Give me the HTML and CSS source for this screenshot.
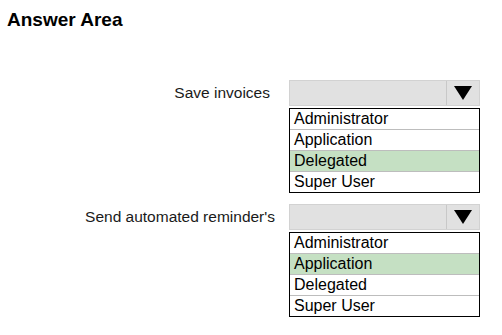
FILE: index.html
```html
<!DOCTYPE html>
<html lang="en">
<head>
  <meta charset="UTF-8">
  <title>Answer Area</title>
  <link rel="stylesheet" href="styles.css">
</head>
<body>
  <h1 class="title">Answer Area</h1>
  <div class="answers">
    <div class="row">
      <div class="label">Save invoices</div>
      <div class="field">
        <div class="select">
          <div class="select-value"></div>
          <div class="select-arrow"><span class="triangle"></span></div>
        </div>
        <ul class="options">
          <li>Administrator</li>
          <li>Application</li>
          <li class="picked">Delegated</li>
          <li>Super User</li>
        </ul>
      </div>
    </div>
    <div class="row">
      <div class="label">Send automated reminder's</div>
      <div class="field">
        <div class="select">
          <div class="select-value"></div>
          <div class="select-arrow"><span class="triangle"></span></div>
        </div>
        <ul class="options">
          <li>Administrator</li>
          <li class="picked">Application</li>
          <li>Delegated</li>
          <li>Super User</li>
        </ul>
      </div>
    </div>
  </div>
</body>
</html>
```

FILE: styles.css
```css
body {
  margin: 0;
  background-color: #fff;
  font-family: "Liberation Sans", Arial, sans-serif;
  color: #111;
}

.title {
  margin: 0;
  padding: 8px 7px 0;
  font-size: 19px;
  line-height: 24px;
  font-weight: bold;
  color: #000;
}

.answers {
  display: flex;
  flex-direction: column;
  gap: 11px;
  padding-top: 48px;
}

.row {
  display: grid;
  grid-template-columns: 275px 191px;
  column-gap: 14px;
  align-items: start;
}

.label {
  text-align: right;
  font-size: 15.5px;
  line-height: 26px;
  color: #1a1a1a;
}

.row:first-child .label {
  padding-right: 5px;
}

.select {
  display: flex;
  height: 26px;
  box-sizing: border-box;
  border: 1px solid #d2d2d2;
  background-color: #e1e1e1;
}

.select-value {
  flex: 1;
}

.select-arrow {
  width: 32px;
  border-left: 1px solid #c8c8c8;
  display: flex;
  justify-content: center;
  align-items: center;
}

.triangle {
  width: 0;
  height: 0;
  border-left: 9px solid transparent;
  border-right: 9px solid transparent;
  border-top: 14px solid #000;
}

.options {
  list-style: none;
  margin: 2px 0 0;
  padding: 0;
  border: 1px solid #000;
}

.options li {
  height: 20px;
  line-height: 20px;
  padding-left: 4px;
  font-size: 16px;
  color: #000;
}

.options li + li {
  border-top: 1px solid #bdbdbd;
}

.options li.picked {
  background-color: #c5e0c3;
}
```
